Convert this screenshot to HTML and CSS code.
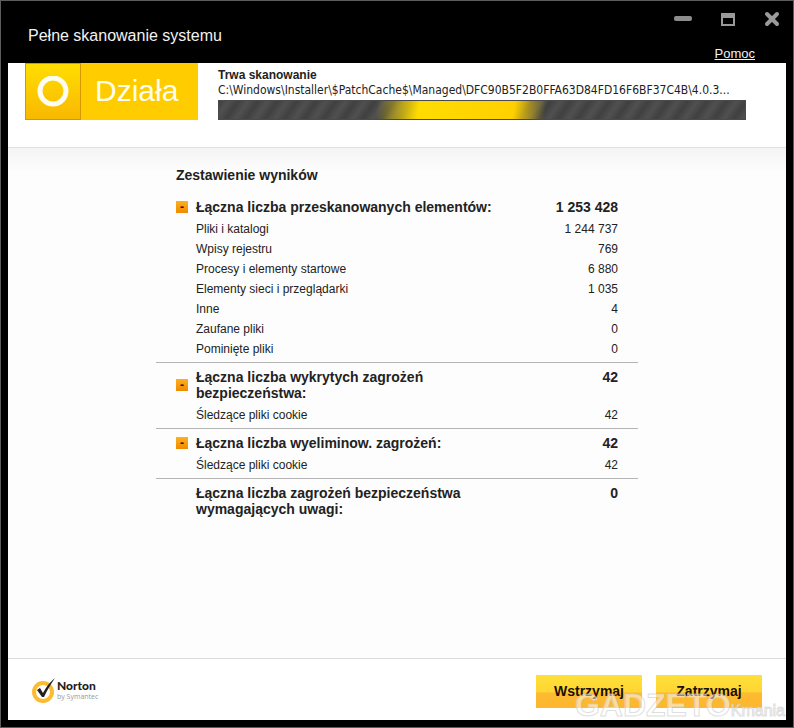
FILE: index.html
```html
<!DOCTYPE html>
<html lang="pl">
<head>
    <meta charset="UTF-8">
    <meta name="viewport" content="width=device-width, initial-scale=1.0">
    <title>Pełne skanowanie systemu</title>
    <link rel="stylesheet" href="styles.css">
</head>
<body>
    <div class="window">
        <header class="titlebar">
            <h1>Pełne skanowanie systemu</h1>
            <div class="titlebar-right">
                <div class="window-buttons">
                    <button type="button" aria-label="Minimalizuj">
                        <svg width="18" height="16" viewBox="0 0 18 16"><rect x="0" y="5" width="18" height="5" rx="2" fill="#8c8c8c"/></svg>
                    </button>
                    <button type="button" aria-label="Maksymalizuj">
                        <svg width="14" height="16" viewBox="0 0 14 16"><path d="M0 2h14v13H0z M2 7v6h10V7z" fill="#9a9a9a" fill-rule="evenodd"/></svg>
                    </button>
                    <button type="button" aria-label="Zamknij">
                        <svg width="16" height="16" viewBox="0 0 16 16"><path d="M3 3l10 10M13 3L3 13" stroke="#9a9a9a" stroke-width="4" stroke-linecap="round"/></svg>
                    </button>
                </div>
                <a class="help" href="#">Pomoc</a>
            </div>
        </header>

        <main class="content">
            <section class="status">
                <div class="badge">
                    <div class="badge-icon">
                        <svg width="32" height="32" viewBox="0 0 32 32"><circle cx="16" cy="15" r="13" fill="none" stroke="#fffdf0" stroke-width="5"/></svg>
                    </div>
                    <div class="badge-text">Działa</div>
                </div>
                <div class="progress">
                    <div class="progress-title">Trwa skanowanie</div>
                    <div class="progress-path">C:\Windows\Installer\$PatchCache$\Managed\DFC90B5F2B0FFA63D84FD16F6BF37C4B\4.0.3...</div>
                    <div class="progress-bar" role="progressbar" aria-label="Trwa skanowanie"></div>
                </div>
            </section>

            <section class="results">
                <h2>Zestawienie wyników</h2>
                <table>
                    <tbody>
                        <tr class="total">
                            <td class="toggle"><button type="button" aria-label="Zwiń">-</button></td>
                            <th scope="row">Łączna liczba przeskanowanych elementów:</th>
                            <td class="num">1 253 428</td>
                        </tr>
                        <tr><td></td><td>Pliki i katalogi</td><td class="num">1 244 737</td></tr>
                        <tr><td></td><td>Wpisy rejestru</td><td class="num">769</td></tr>
                        <tr><td></td><td>Procesy i elementy startowe</td><td class="num">6 880</td></tr>
                        <tr><td></td><td>Elementy sieci i przeglądarki</td><td class="num">1 035</td></tr>
                        <tr><td></td><td>Inne</td><td class="num">4</td></tr>
                        <tr><td></td><td>Zaufane pliki</td><td class="num">0</td></tr>
                        <tr class="last"><td></td><td>Pominięte pliki</td><td class="num">0</td></tr>
                    </tbody>
                    <tbody>
                        <tr class="total">
                            <td class="toggle"><button type="button" aria-label="Zwiń">-</button></td>
                            <th scope="row">Łączna liczba wykrytych zagrożeń<br>bezpieczeństwa:</th>
                            <td class="num">42</td>
                        </tr>
                        <tr class="last"><td></td><td>Śledzące pliki cookie</td><td class="num">42</td></tr>
                    </tbody>
                    <tbody>
                        <tr class="total">
                            <td class="toggle"><button type="button" aria-label="Zwiń">-</button></td>
                            <th scope="row">Łączna liczba wyeliminow. zagrożeń:</th>
                            <td class="num">42</td>
                        </tr>
                        <tr class="last"><td></td><td>Śledzące pliki cookie</td><td class="num">42</td></tr>
                    </tbody>
                    <tbody>
                        <tr class="total">
                            <td></td>
                            <th scope="row">Łączna liczba zagrożeń bezpieczeństwa<br>wymagających uwagi:</th>
                            <td class="num">0</td>
                        </tr>
                    </tbody>
                </table>
            </section>

            <footer class="actions">
                <div class="logo">
                    <svg width="24" height="28" viewBox="0 0 24 28">
                        <circle cx="11" cy="15" r="9" fill="none" stroke="#fdbb30" stroke-width="4"/>
                        <path d="M5 13l3-2 3 5C14 10 18 5 23 1 19 7 15 13 12 20h-2z" fill="#231f20"/>
                    </svg>
                    <div class="logo-text">
                        <div class="logo-name">Norton</div>
                        <div class="logo-by">by Symantec</div>
                    </div>
                </div>
                <button type="button">Wstrzymaj</button>
                <button type="button">Zatrzymaj</button>
            </footer>
        </main>
        <div class="watermark">GADZETO<span>Kmania</span></div>
    </div>
</body>
</html>
```
FILE: styles.css
```css
* {
    box-sizing: border-box;
}
body {
    margin: 0;
    font-family: "Liberation Sans", Arial, sans-serif;
    font-size: 12px;
    color: #222;
}
h1, h2 {
    margin: 0;
}
button {
    font-family: inherit;
    border: 0;
    padding: 0;
    cursor: pointer;
}
.window {
    position: relative;
    display: flex;
    flex-direction: column;
    min-height: 100vh;
    padding: 0 7px 7px;
    background: #000;
    border: 1px solid #5c5c5c;
}
.titlebar {
    display: flex;
    justify-content: space-between;
    height: 62px;
    padding: 10px 6px 0 20px;
    color: #f2f2f2;
}
.titlebar h1 {
    margin-top: 15px;
    font-size: 16px;
    font-weight: normal;
    line-height: 20px;
}
.titlebar-right {
    display: flex;
    flex-direction: column;
    justify-content: space-between;
}
.window-buttons {
    display: flex;
    gap: 29px;
}
.window-buttons button {
    background: none;
}
.window-buttons svg {
    display: block;
}
.help {
    align-self: flex-end;
    margin-right: 25px;
    color: #f2f2f2;
    font-size: 13px;
    line-height: 18px;
}
.content {
    flex: 1;
    display: flex;
    flex-direction: column;
    background: #fdfdfd;
}
.status {
    display: flex;
    align-items: flex-start;
    gap: 20px;
    height: 85px;
    padding: 0 40px 0 17px;
    background: #fff;
    border-bottom: 1px solid #e0e0e0;
}
.badge {
    display: flex;
    height: 57px;
    background: #fc0;
    color: #fffdf0;
}
.badge-icon {
    display: flex;
    align-items: center;
    justify-content: center;
    width: 56px;
    background: linear-gradient(#fd0, #f9b800);
    border: 1px solid #d39a00;
}
.badge-text {
    width: 117px;
    padding-left: 14px;
    font-size: 30px;
    line-height: 56px;
}
.progress {
    flex: 1;
    min-width: 0;
    padding-top: 4px;
}
.progress-title {
    font-weight: bold;
    line-height: 16px;
}
.progress-path {
    overflow: hidden;
    font-family: "DejaVu Sans Condensed", "Noto Sans", sans-serif;
    line-height: 14px;
    white-space: nowrap;
}
.progress-bar {
    height: 20px;
    margin-top: 3px;
    border: 1px solid #4a4a4a;
    background:
        linear-gradient(100deg, transparent 30%, #ffdc00 38%, #ffd000 56%, transparent 62%),
        repeating-linear-gradient(125deg, #404040 0, #505050 8px, #404040 16px);
}
.results {
    flex: 1;
    padding: 17px 0 20px 148px;
    background: linear-gradient(#f4f4f4, #fdfdfd 24px);
}
.results h2 {
    padding-left: 20px;
    font-size: 14px;
    line-height: 20px;
}
table {
    width: 482px;
    margin-top: 8px;
    border-collapse: collapse;
}
tbody + tbody {
    border-top: 1px solid #b4b4b4;
}
td, th {
    padding: 0;
    line-height: 20px;
    text-align: left;
    vertical-align: top;
}
td:first-child {
    width: 40px;
    padding-left: 20px;
}
.num {
    padding-right: 20px;
    text-align: right;
}
.total td, .total th {
    padding-top: 6px;
    padding-bottom: 4px;
    font-size: 14px;
    font-weight: bold;
    line-height: 16px;
}
.last td {
    padding-bottom: 3px;
}
.total .toggle {
    vertical-align: middle;
}
.toggle button {
    display: block;
    width: 12px;
    height: 12px;
    background: linear-gradient(#fdb020, #f08a00);
    color: #3a1400;
    font-size: 12px;
    font-weight: bold;
    line-height: 12px;
}
.actions {
    display: flex;
    align-items: center;
    gap: 14px;
    height: 62px;
    padding: 3px 24px 0;
    background: #fff;
    border-top: 1px solid #dcdcdc;
}
.logo {
    display: flex;
    align-items: center;
    gap: 1px;
    margin-right: auto;
}
.logo-name {
    color: #231f20;
    font-family: Lato, sans-serif;
    font-size: 12px;
    font-weight: 900;
    line-height: 12px;
}
.logo-by {
    color: #999;
    font-family: "Open Sans", sans-serif;
    font-size: 7px;
    line-height: 10px;
}
.actions button {
    width: 106px;
    height: 33px;
    background: linear-gradient(#ffe03a, #ffd633 50%, #fdbb30 55%, #fdb62f);
    color: #1a0f00;
    font-size: 14px;
    font-weight: bold;
}
.watermark {
    position: absolute;
    right: 8px;
    bottom: 0;
    color: rgba(255, 255, 255, 0.5);
    font-size: 32px;
    font-weight: bold;
    line-height: 32px;
    -webkit-text-stroke: 1px rgba(200, 200, 200, 0.6);
    pointer-events: none;
}
.watermark span {
    font-size: 16px;
    font-weight: normal;
}
```
